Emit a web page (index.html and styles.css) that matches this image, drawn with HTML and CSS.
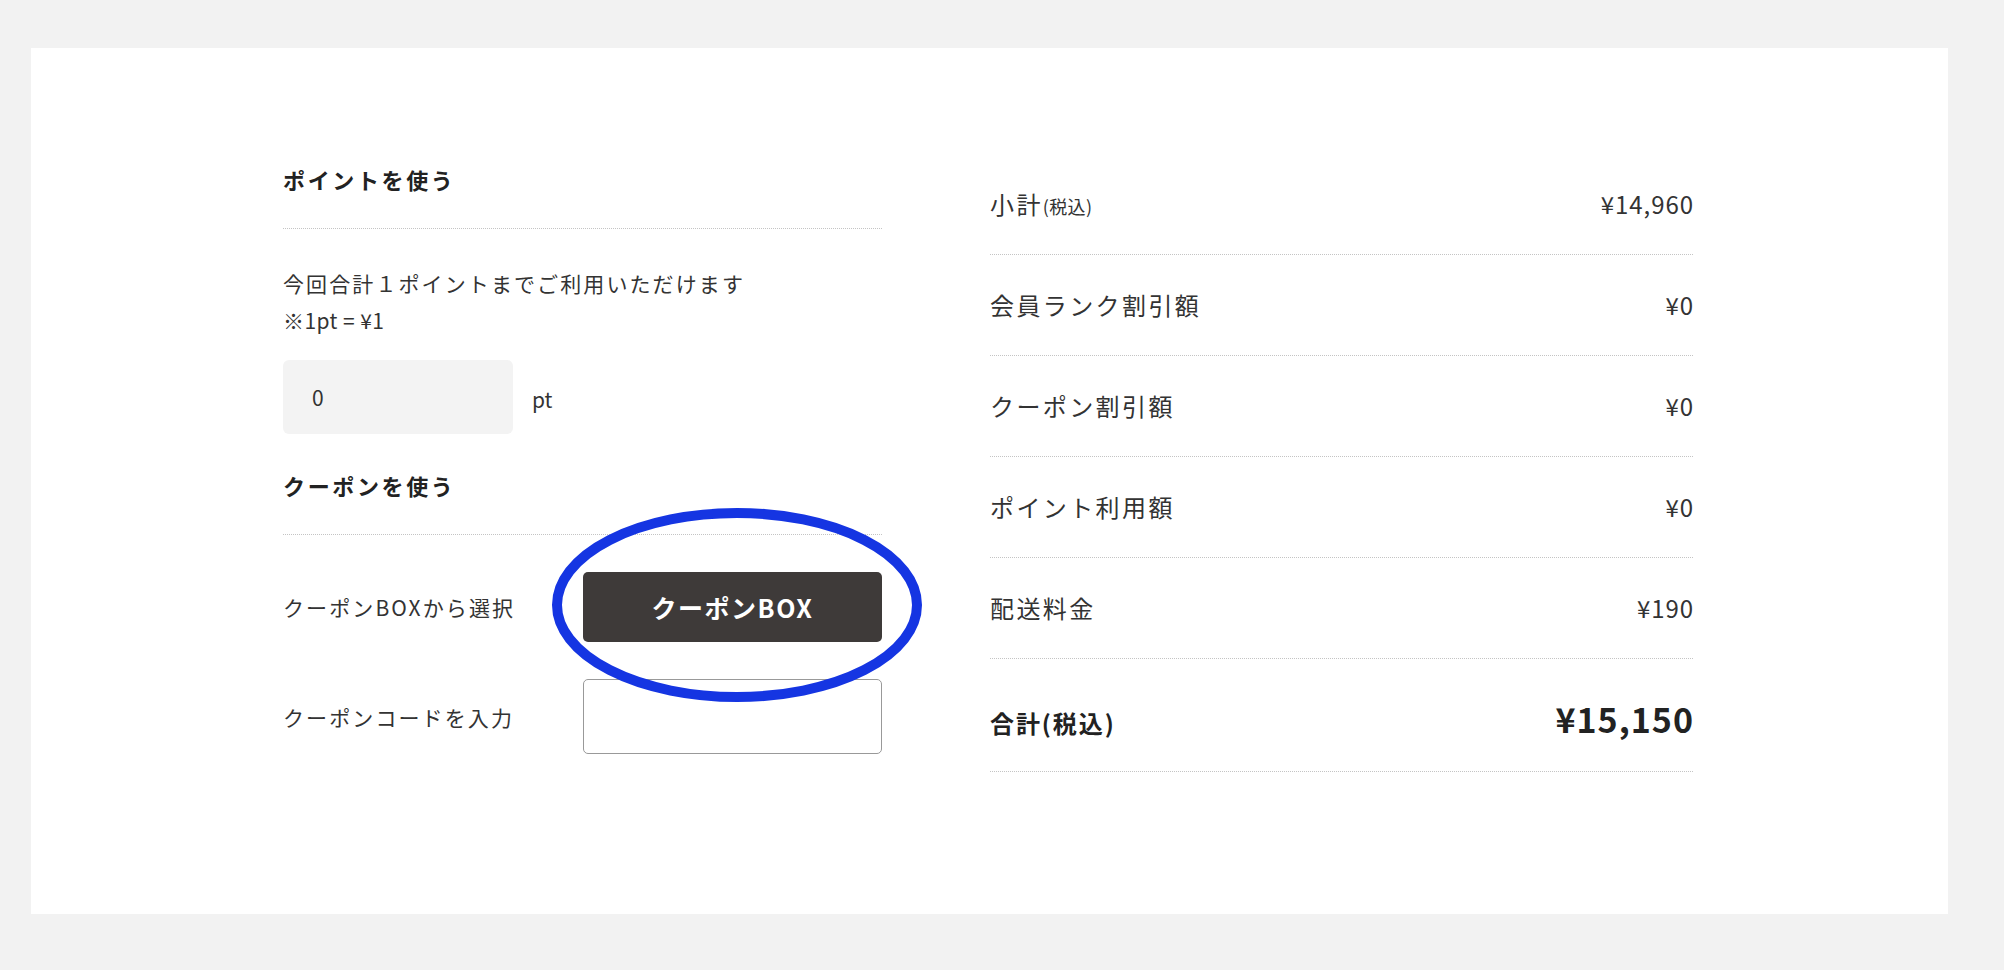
FILE: index.html
```html
<!DOCTYPE html>
<html lang="ja">
<head>
<meta charset="utf-8">
<title>ポイント・クーポン</title>
<link rel="stylesheet" href="styles.css">
</head>
<body>
<div class="page">
  <div class="card">
    <div class="content">
      <div class="left">
        <section class="block block-point">
          <h3 class="block-title">ポイントを使う</h3>
          <p class="note">今回合計１ポイントまでご利用いただけます<br><span class="rate">※1pt = ¥1</span></p>
          <div class="point-row">
            <div class="point-input">0</div>
            <span class="unit">pt</span>
          </div>
        </section>
        <section class="block block-coupon">
          <h3 class="block-title">クーポンを使う</h3>
          <div class="coupon-row coupon-row-first">
            <span class="coupon-label">クーポンBOXから選択</span>
            <div class="coupon-control">
              <button class="btn-box" type="button">クーポンBOX</button>
              <svg class="mark" width="372" height="196" viewBox="0 0 372 196" aria-hidden="true">
                <ellipse cx="186" cy="98" rx="180" ry="92" fill="none" stroke="#1535e2" stroke-width="10"/>
              </svg>
            </div>
          </div>
          <div class="coupon-row">
            <span class="coupon-label">クーポンコードを入力</span>
            <div class="coupon-control">
              <input class="code-input" type="text" value="">
            </div>
          </div>
        </section>
      </div>
      <div class="right">
        <div class="sum-row">
          <span class="sum-label">小計<small class="tax">(税込)</small></span>
          <span class="sum-value">¥14,960</span>
        </div>
        <div class="sum-row">
          <span class="sum-label">会員ランク割引額</span>
          <span class="sum-value">¥0</span>
        </div>
        <div class="sum-row">
          <span class="sum-label">クーポン割引額</span>
          <span class="sum-value">¥0</span>
        </div>
        <div class="sum-row">
          <span class="sum-label">ポイント利用額</span>
          <span class="sum-value">¥0</span>
        </div>
        <div class="sum-row">
          <span class="sum-label">配送料金</span>
          <span class="sum-value">¥190</span>
        </div>
        <div class="sum-row sum-total">
          <span class="sum-label">合計(税込)</span>
          <span class="sum-value">¥15,150</span>
        </div>
      </div>
    </div>
  </div>
</div>
</body>
</html>
```
FILE: styles.css
```css
* {
  box-sizing: border-box;
}

html, body {
  margin: 0;
  padding: 0;
}

body {
  background: #f2f2f2;
  font-family: "Noto Sans CJK JP", "Noto Sans", sans-serif;
  color: #333;
}

.page {
  padding: 48px 56px 56px 31px;
}

.card {
  background: #fff;
  height: 866px;
  padding: 106px 0 0 252px;
}

.content {
  display: flex;
  gap: 108px;
  align-items: flex-start;
}

.left {
  width: 599px;
  flex: none;
}

.right {
  width: 703px;
  flex: none;
}

.block-title {
  margin: 0;
  font-size: 22px;
  line-height: 33px;
  font-weight: 700;
  letter-spacing: 0.12em;
  color: #222;
  padding-bottom: 32px;
  border-bottom: 1px dotted #c4c4c4;
}

.block-point .block-title {
  padding-top: 9px;
}

.block-coupon {
  margin-top: 35px;
}

.note {
  margin: 36px 0 0;
  font-size: 21px;
  line-height: 37px;
  letter-spacing: 0.1em;
}

.rate {
  letter-spacing: 0.02em;
}

.point-row {
  margin-top: 21px;
  display: flex;
  align-items: center;
  gap: 19px;
}

.point-input {
  width: 230px;
  height: 74px;
  background: #f3f3f3;
  border-radius: 6px;
  padding-left: 29px;
  display: flex;
  align-items: center;
  font-size: 21px;
}

.unit {
  font-size: 21px;
  padding-top: 4px;
}

.coupon-row {
  margin-top: 37px;
  display: flex;
  align-items: center;
}

.coupon-label {
  width: 300px;
  flex: none;
  font-size: 21px;
  letter-spacing: 0.1em;
}

.coupon-control {
  position: relative;
  width: 299px;
}

.btn-box {
  display: block;
  width: 299px;
  height: 70px;
  border: 0;
  border-radius: 5px;
  background: #3e3a39;
  color: #fff;
  font-family: inherit;
  font-size: 25px;
  font-weight: 700;
  letter-spacing: 0.06em;
  padding: 0;
}

.mark {
  position: absolute;
  left: -32px;
  top: -65px;
  z-index: 2;
  pointer-events: none;
}

.code-input {
  display: block;
  width: 299px;
  height: 75px;
  border: 1px solid #999;
  border-radius: 5px;
  background: #fff;
  font-family: inherit;
  font-size: 21px;
  padding: 0 16px;
}

.sum-row {
  display: flex;
  justify-content: space-between;
  align-items: baseline;
  height: 101px;
  padding-top: 32px;
  border-bottom: 1px dotted #c4c4c4;
  font-size: 24px;
  line-height: 36px;
  letter-spacing: 0.1em;
}

.sum-value {
  letter-spacing: 0.04em;
  margin-right: -1px;
}

.tax {
  font-size: 18px;
  letter-spacing: 0.02em;
}

.sum-total {
  height: 113px;
  padding-top: 36px;
  font-weight: 700;
  line-height: 48px;
  color: #222;
}

.sum-total .sum-label {
  letter-spacing: 0.08em;
}

.sum-total .sum-value {
  font-size: 34px;
  letter-spacing: 0.03em;
}
```
